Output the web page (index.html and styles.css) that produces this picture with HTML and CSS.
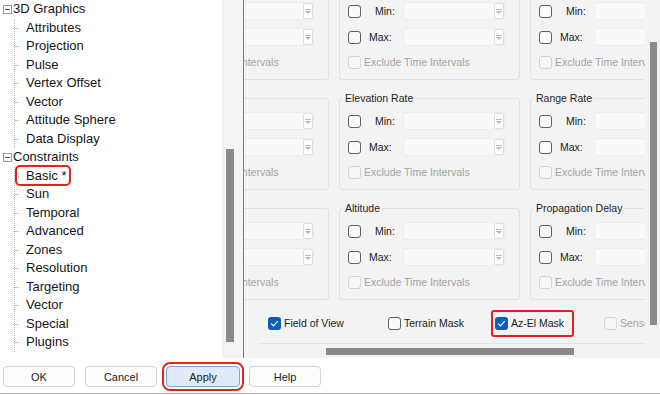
FILE: index.html
```html
<!DOCTYPE html>
<html lang="en">
<head>
    <meta charset="UTF-8">
    <meta name="viewport" content="width=device-width, initial-scale=1.0">
    <title>Properties - Constraints</title>
    <link rel="stylesheet" href="styles.css">
</head>
<body>
    <div class="main">
        <!-- Category tree -->
        <div class="tree-pane">
            <ul class="tree">
                <li><span class="expander"></span>3D Graphics
                    <ul class="children">
                        <li>Attributes</li>
                        <li>Projection</li>
                        <li>Pulse</li>
                        <li>Vertex Offset</li>
                        <li>Vector</li>
                        <li>Attitude Sphere</li>
                        <li>Data Display</li>
                    </ul>
                </li>
                <li><span class="expander"></span>Constraints
                    <ul class="children">
                        <li><span class="marked">Basic *</span></li>
                        <li>Sun</li>
                        <li>Temporal</li>
                        <li>Advanced</li>
                        <li>Zones</li>
                        <li>Resolution</li>
                        <li>Targeting</li>
                        <li>Vector</li>
                        <li>Special</li>
                        <li>Plugins</li>
                    </ul>
                </li>
            </ul>
            <div class="vscroll tree-scroll"><div class="thumb"></div></div>
        </div>
        <div class="divider"></div>

        <!-- Basic constraints page (scrolled) -->
        <div class="content-pane">
            <div class="content">
                <div class="groups">
                    <fieldset class="group">
                        <legend>Azimuth Angle</legend>
                        <div class="row"><span class="check"></span><span class="lbl min">Min:</span><span class="field"><span class="spin"></span></span></div>
                        <div class="row"><span class="check"></span><span class="lbl max">Max:</span><span class="field"><span class="spin"></span></span></div>
                        <div class="row excl"><span class="check off"></span><span class="dim">Exclude Time Intervals</span></div>
                    </fieldset>
                    <fieldset class="group">
                        <legend>Elevation Angle</legend>
                        <div class="row"><span class="check"></span><span class="lbl min">Min:</span><span class="field"><span class="spin"></span></span></div>
                        <div class="row"><span class="check"></span><span class="lbl max">Max:</span><span class="field"><span class="spin"></span></span></div>
                        <div class="row excl"><span class="check off"></span><span class="dim">Exclude Time Intervals</span></div>
                    </fieldset>
                    <fieldset class="group">
                        <legend>Range</legend>
                        <div class="row"><span class="check"></span><span class="lbl min">Min:</span><span class="field"><span class="spin"></span></span></div>
                        <div class="row"><span class="check"></span><span class="lbl max">Max:</span><span class="field"><span class="spin"></span></span></div>
                        <div class="row excl"><span class="check off"></span><span class="dim">Exclude Time Intervals</span></div>
                    </fieldset>

                    <fieldset class="group">
                        <legend>Azimuth Rate</legend>
                        <div class="row"><span class="check"></span><span class="lbl min">Min:</span><span class="field"><span class="spin"></span></span></div>
                        <div class="row"><span class="check"></span><span class="lbl max">Max:</span><span class="field"><span class="spin"></span></span></div>
                        <div class="row excl"><span class="check off"></span><span class="dim">Exclude Time Intervals</span></div>
                    </fieldset>
                    <fieldset class="group">
                        <legend>Elevation Rate</legend>
                        <div class="row"><span class="check"></span><span class="lbl min">Min:</span><span class="field"><span class="spin"></span></span></div>
                        <div class="row"><span class="check"></span><span class="lbl max">Max:</span><span class="field"><span class="spin"></span></span></div>
                        <div class="row excl"><span class="check off"></span><span class="dim">Exclude Time Intervals</span></div>
                    </fieldset>
                    <fieldset class="group">
                        <legend>Range Rate</legend>
                        <div class="row"><span class="check"></span><span class="lbl min">Min:</span><span class="field"><span class="spin"></span></span></div>
                        <div class="row"><span class="check"></span><span class="lbl max">Max:</span><span class="field"><span class="spin"></span></span></div>
                        <div class="row excl"><span class="check off"></span><span class="dim">Exclude Time Intervals</span></div>
                    </fieldset>

                    <fieldset class="group">
                        <legend>Angular Rate</legend>
                        <div class="row"><span class="check"></span><span class="lbl min">Min:</span><span class="field"><span class="spin"></span></span></div>
                        <div class="row"><span class="check"></span><span class="lbl max">Max:</span><span class="field"><span class="spin"></span></span></div>
                        <div class="row excl"><span class="check off"></span><span class="dim">Exclude Time Intervals</span></div>
                    </fieldset>
                    <fieldset class="group">
                        <legend>Altitude</legend>
                        <div class="row"><span class="check"></span><span class="lbl min">Min:</span><span class="field"><span class="spin"></span></span></div>
                        <div class="row"><span class="check"></span><span class="lbl max">Max:</span><span class="field"><span class="spin"></span></span></div>
                        <div class="row excl"><span class="check off"></span><span class="dim">Exclude Time Intervals</span></div>
                    </fieldset>
                    <fieldset class="group">
                        <legend>Propagation Delay</legend>
                        <div class="row"><span class="check"></span><span class="lbl min">Min:</span><span class="field"><span class="spin"></span></span></div>
                        <div class="row"><span class="check"></span><span class="lbl max">Max:</span><span class="field"><span class="spin"></span></span></div>
                        <div class="row excl"><span class="check off"></span><span class="dim">Exclude Time Intervals</span></div>
                    </fieldset>
                </div>

                <!-- Sensor related toggles -->
                <div class="options">
                    <div class="opt w120"><span class="check on"><svg viewBox="0 0 13 13" width="13" height="13"><path d="M3.2 6.6 L5.4 8.8 L9.8 4.2" fill="none" stroke="#fff" stroke-width="1.2"/></svg></span>Field of View</div>
                    <div class="opt w107"><span class="check"></span>Terrain Mask</div>
                    <div class="opt w109"><span class="marked-box"><span class="check on"><svg viewBox="0 0 13 13" width="13" height="13"><path d="M3.2 6.6 L5.4 8.8 L9.8 4.2" fill="none" stroke="#fff" stroke-width="1.2"/></svg></span>Az-El Mask</span></div>
                    <div class="opt dim"><span class="check off"></span>Sensor Obscuration</div>
                </div>
                <div class="hline"></div>
                <div class="hscroll"><div class="thumb"></div></div>
            </div>
            <div class="vscroll pane-scroll"><div class="thumb"></div></div>
        </div>
    </div>

    <!-- Dialog buttons -->
    <div class="button-bar">
        <button>OK</button>
        <button>Cancel</button>
        <button class="apply">Apply</button>
        <button>Help</button>
    </div>
</body>
</html>
```

FILE: styles.css
```css
body {
    margin: 0;
    width: 660px;
    height: 395px;
    overflow: hidden;
    background-color: #ffffff;
    font-family: "Liberation Sans", Arial, sans-serif;
    color: #1b1b1b;
}
.main {
    display: flex;
    height: 358px;
}

/* ---- tree ---- */
.tree-pane {
    display: flex;
    width: 243px;
    background-color: #fff;
}
.tree {
    list-style: none;
    margin: 0;
    padding: 0;
    width: 222px;
    font-size: 13px;
    line-height: 18.5px;
    color: #151515;
}
.tree li {
    white-space: nowrap;
}
.expander {
    display: inline-block;
    position: relative;
    width: 7px;
    height: 7px;
    border: 1px solid #9a9a9a;
    margin: 0 1px 0 3px;
    vertical-align: -1px;
}
.expander::after {
    content: "";
    position: absolute;
    left: 1px;
    top: 3px;
    width: 5px;
    height: 1px;
    background-color: #555;
}
.children {
    list-style: none;
    margin: 0 0 0 14px;
    padding: 0;
    border-left: 1px dotted #b0b0b0;
}
.children li::before {
    content: "";
    display: inline-block;
    width: 4px;
    border-top: 1px dotted #b0b0b0;
    vertical-align: middle;
    margin-right: 7px;
}
.marked {
    padding: 0 2px 0 8px;
    margin-left: -8px;
    outline: 2px solid #e5211d;
    outline-offset: 1px;
    border-radius: 2px;
}

.vscroll {
    background-color: #f4f4f4;
}
.tree-scroll {
    width: 21px;
}
.tree-scroll .thumb {
    margin: 149px 0 0 4px;
    width: 8px;
    height: 193px;
    background-color: #8a8a8a;
}
.divider {
    width: 1px;
    background-color: #7c7c7c;
}

/* ---- right page ---- */
.content-pane {
    display: flex;
    flex: 1;
    background-color: #f3f3f3;
}
.content {
    width: 401px;
    overflow: hidden;
    display: flex;
    flex-direction: column;
    font-size: 10.5px;
}
.groups {
    display: grid;
    grid-template-columns: repeat(3, 181px);
    column-gap: 10px;
    row-gap: 12px;
    margin: -18px 0 0 -96px;
}
.group {
    margin: 0;
    padding: 4px 14px 5px 8px;
    border: 1px solid #e2e2e2;
    border-radius: 3px;
    min-width: 0;
}
.group legend {
    padding: 0 2px;
    margin-left: -5px;
    line-height: 12px;
    color: #1e1e1e;
    white-space: nowrap;
}
.row {
    display: flex;
    align-items: center;
    height: 26px;
    white-space: nowrap;
}
.row.excl {
    height: 24px;
}
.check {
    display: inline-block;
    flex: none;
    width: 11px;
    height: 11px;
    border: 1px solid #5e5e5e;
    border-radius: 3px;
    background-color: #fbfbfb;
}
.check.off {
    border-color: #d4d4d4;
    background-color: #f6f6f6;
}
.check.on {
    width: 13px;
    height: 13px;
    border: none;
    background-color: #0a5fb8;
}
.check svg {
    display: block;
}
.lbl {
    width: 42px;
    box-sizing: border-box;
}
.lbl.min {
    padding-left: 14px;
}
.lbl.max {
    padding-left: 8px;
}
.field {
    display: flex;
    justify-content: flex-end;
    align-items: center;
    width: 102px;
    height: 18px;
    box-sizing: border-box;
    border: 1px solid #ededed;
    background-color: #f8f8f8;
}
.spin {
    display: flex;
    flex-direction: column;
    align-items: center;
    justify-content: center;
    width: 10px;
    height: 16px;
    box-sizing: border-box;
    border: 1px solid #dedede;
    border-radius: 2px;
    background-color: #fff;
}
.spin::before {
    content: "";
    width: 6px;
    height: 1px;
    background-color: #b8b8b8;
}
.spin::after {
    content: "";
    margin-top: 1px;
    border-left: 3px solid transparent;
    border-right: 3px solid transparent;
    border-top: 3px solid #b8b8b8;
}
.dim {
    color: #a3a3a3;
    margin-left: 3px;
}

.options {
    display: flex;
    align-items: center;
    height: 40px;
    padding: 3px 0 0 24px;
    white-space: nowrap;
}
.opt {
    display: flex;
    align-items: center;
    flex: none;
    gap: 3px;
}
.opt.dim {
    margin-left: 0;
}
.w120 { width: 120px; }
.w107 { width: 107px; }
.w109 { width: 109px; }
.marked-box {
    display: flex;
    align-items: center;
    gap: 3px;
    margin-left: -4px;
    padding: 5px 8px 5px 2px;
    border: 2px solid #e5211d;
    border-radius: 3px;
}
.hline {
    margin-left: 14px;
    border-top: 1px solid #e4e4e4;
}
.hscroll {
    height: 14px;
}
.hscroll .thumb {
    margin: 4px 0 0 82px;
    width: 248px;
    height: 7px;
    background-color: #8a8a8a;
}
.pane-scroll {
    width: 15px;
    background-color: #f3f3f3;
}
.pane-scroll .thumb {
    margin: 42px 0 0 5px;
    width: 7px;
    height: 283px;
    background-color: #8a8a8a;
}

/* ---- dialog buttons ---- */
.button-bar {
    display: flex;
    gap: 9px;
    height: 36px;
    padding: 8px 0 0 3px;
    box-sizing: border-box;
    border-bottom: 1px solid #b4b4b4;
}
.button-bar button {
    width: 72px;
    height: 21px;
    border: 1px solid #d3d3d3;
    border-radius: 4px;
    background-color: #fdfdfd;
    font-family: "Liberation Sans", Arial, sans-serif;
    font-size: 11px;
    color: #1b1b1b;
    padding: 0;
}
.button-bar button:first-child {
    margin-right: 1px;
}
.button-bar .apply {
    width: 74px;
    background-color: #e0ebf7;
    border-color: #7ea4d4;
    outline: 2px solid #e5211d;
    outline-offset: 2px;
}
```
